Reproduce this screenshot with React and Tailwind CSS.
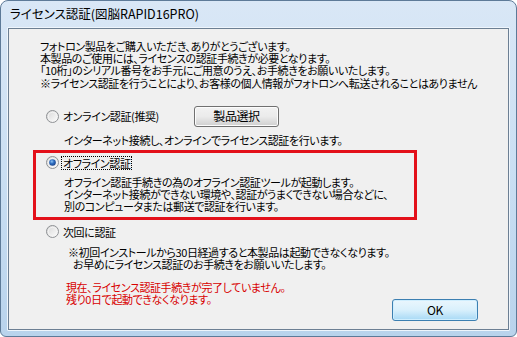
import React from "react";

const font = { fontFamily: '"Noto Sans CJK JP", "Noto Sans", sans-serif' };

function Radio({ checked }) {
  return (
    <svg width="13" height="13" viewBox="0 0 13 13" className="shrink-0">
      <defs>
        <linearGradient id={checked ? "rgc" : "rgu"} x1="0" y1="0" x2="1" y2="1">
          <stop offset="0" stopColor="#d6d6d6" />
          <stop offset="1" stopColor="#ffffff" />
        </linearGradient>
        <radialGradient id="dot" cx="0.4" cy="0.35" r="0.7">
          <stop offset="0" stopColor="#8fc4f4" />
          <stop offset="0.45" stopColor="#2f6fc2" />
          <stop offset="1" stopColor="#173e86" />
        </radialGradient>
      </defs>
      <circle cx="6.5" cy="6.5" r="6" fill={`url(#${checked ? "rgc" : "rgu"})`} stroke="#8e9194" strokeWidth="1" />
      <circle cx="6.5" cy="6.5" r="4.2" fill="none" stroke="#f4f4f4" strokeWidth="1" />
      {checked && <circle cx="6.5" cy="6.5" r="3.3" fill="url(#dot)" />}
    </svg>
  );
}

export default function App() {
  return (
    <div className="w-[517px] h-[337px] bg-white">
      <div
        className="relative w-[517px] h-[337px] rounded-t-[8px] rounded-b-[6px] border border-[#5d7a98] bg-gradient-to-b from-[#d9e7f6] via-[#cadff3] to-[#b9d3ec] flex flex-col"
        style={font}
      >
        <div className="h-[26px] flex items-center pl-[9px] text-[12.5px] text-black [font-feature-settings:'palt']">
          ライセンス認証(図脳RAPID16PRO)
        </div>
        <div className="mx-[6px] border border-[#eef5fc] rounded-[1px]">
          <div className="h-[302px] border border-[#6c7f93] bg-[#f0f0f0] flex flex-col text-[11px] tracking-[-0.4px] text-black leading-[12px] [font-feature-settings:'palt']">
            <div className="mt-[11px] ml-[31px] flex flex-col">
              <div className="h-[12px] whitespace-nowrap">フォトロン製品をご購入いただき、ありがとうございます。</div>
              <div className="h-[12px] whitespace-nowrap">本製品のご使用には、ライセンスの認証手続きが必要となります。</div>
              <div className="h-[12.5px] whitespace-nowrap">「10桁」のシリアル番号をお手元にご用意のうえ、お手続きをお願いいたします。</div>
              <div className="h-[12px] whitespace-nowrap">※ライセンス認証を行うことにより、お客様の個人情報がフォトロンへ転送されることはありません</div>
            </div>

            <div className="mt-[17px] ml-[37px] h-[21px] flex items-center">
              <Radio checked={false} />
              <span className="ml-[4px] w-[131px] whitespace-nowrap">オンライン認証(推奨)</span>
              <button className="w-[85px] h-[21px] rounded-[3px] border border-[#707070] bg-gradient-to-b from-[#f2f2f2] via-[#ebebeb] to-[#cfcfcf] text-[12px] leading-[12px] text-black shadow-[inset_0_0_0_1px_#fcfcfc]">
                製品選択
              </button>
            </div>
            <div className="mt-[7px] ml-[55px] h-[12px] whitespace-nowrap">
              インターネット接続し、オンラインでライセンス認証を行います。
            </div>

            <div className="mt-[4px] ml-[24px] w-[384px] h-[70px] border-[3px] border-[#e3101a] flex flex-col">
              <div className="mt-[3px] ml-[10px] h-[14px] flex items-center">
                <Radio checked={true} />
                <span className="ml-[2px] px-[1px] h-[14px] flex items-center border border-dotted border-black whitespace-nowrap">
                  オフライン認証
                </span>
              </div>
              <div className="mt-[6px] ml-[28px] flex flex-col">
                <div className="h-[12px] whitespace-nowrap">オフライン認証手続きの為のオフライン認証ツールが起動します。</div>
                <div className="h-[12px] whitespace-nowrap">インターネット接続ができない環境や、認証がうまくできない場合などに、</div>
                <div className="h-[12px] whitespace-nowrap">別のコンピュータまたは郵送で認証を行います。</div>
              </div>
            </div>

            <div className="mt-[5px] ml-[37px] h-[14px] flex items-center">
              <Radio checked={false} />
              <span className="ml-[4px] whitespace-nowrap">次回に認証</span>
            </div>
            <div className="mt-[7px] ml-[59px] flex flex-col">
              <div className="h-[12px] whitespace-nowrap">※初回インストールから30日経過すると本製品は起動できなくなります。</div>
              <div className="h-[12px] pl-[5px] whitespace-nowrap">お早めにライセンス認証のお手続きをお願いいたします。</div>
            </div>

            <div className="mt-[11px] flex justify-between">
              <div className="ml-[57px] flex flex-col text-[#d80000]">
                <div className="h-[12px] whitespace-nowrap">現在、ライセンス認証手続きが完了していません。</div>
                <div className="h-[12px] whitespace-nowrap">残り0日で起動できなくなります。</div>
              </div>
              <button className="mt-[18px] mr-[30px] w-[86px] h-[22px] rounded-[3px] border border-[#3c7fb1] bg-gradient-to-b from-[#eaf6fd] via-[#d9f0fc] to-[#a7d9f5] text-[12px] leading-[12px] text-black shadow-[inset_0_0_0_1px_#cfeefe]">
                OK
              </button>
            </div>
          </div>
        </div>
      </div>
    </div>
  );
}
